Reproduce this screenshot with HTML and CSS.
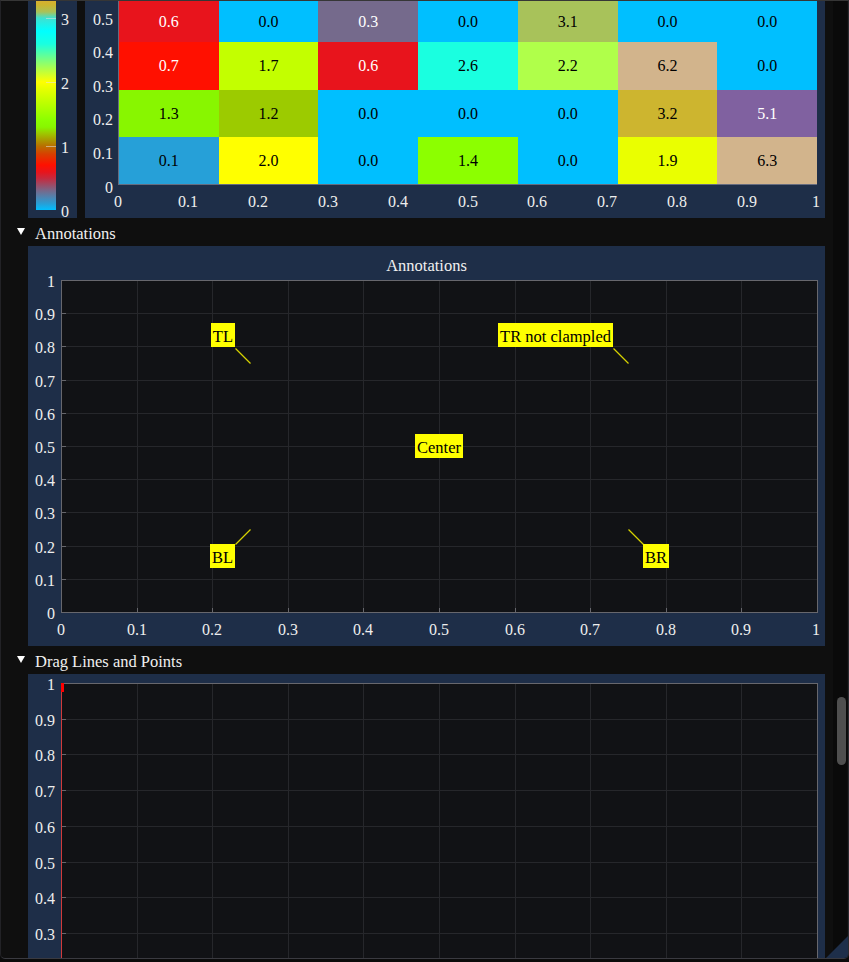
FILE: index.html
```html
<!DOCTYPE html>
<html>
<head>
<meta charset="utf-8">
<link rel="stylesheet" href="styles.css">
</head>
<body>
<div class="window">
  <div class="content">
    <div class="heat-row">
      <div class="frame cbar-frame">
        <div class="cbar">
          <span class="cbar-tick" style="top:17px"></span>
          <span class="cbar-tick" style="top:81px"></span>
          <span class="cbar-tick" style="top:145px"></span>
        </div>
        <div class="cbar-labels">
          <span class="lbl" style="top:17px">3</span>
          <span class="lbl" style="top:81px">2</span>
          <span class="lbl" style="top:145px">1</span>
          <span class="lbl" style="top:209px">0</span>
        </div>
      </div>
      <div class="frame heat-frame">
        <div class="yaxis heat-y">
          <span class="lbl" style="top:19px">0.5</span>
          <span class="lbl" style="top:52px">0.4</span>
          <span class="lbl" style="top:86px">0.3</span>
          <span class="lbl" style="top:119px">0.2</span>
          <span class="lbl" style="top:153px">0.1</span>
          <span class="lbl" style="top:187px">0</span>
        </div>
        <div class="heat-plot">
          <div class="cell light" style="background:#e8141c">0.6</div>
          <div class="cell" style="background:#00bfff">0.0</div>
          <div class="cell light" style="background:#756a8c">0.3</div>
          <div class="cell" style="background:#00bfff">0.0</div>
          <div class="cell" style="background:#a8c25a">3.1</div>
          <div class="cell" style="background:#00bfff">0.0</div>
          <div class="cell" style="background:#00bfff">0.0</div>

          <div class="cell light" style="background:#ff1000">0.7</div>
          <div class="cell" style="background:#c3ff00">1.7</div>
          <div class="cell light" style="background:#e8141c">0.6</div>
          <div class="cell" style="background:#1affe0">2.6</div>
          <div class="cell" style="background:#b0ff4a">2.2</div>
          <div class="cell" style="background:#d2b48c">6.2</div>
          <div class="cell" style="background:#00bfff">0.0</div>

          <div class="cell" style="background:#88f600">1.3</div>
          <div class="cell" style="background:#9ccb00">1.2</div>
          <div class="cell" style="background:#00bfff">0.0</div>
          <div class="cell" style="background:#00bfff">0.0</div>
          <div class="cell" style="background:#00bfff">0.0</div>
          <div class="cell" style="background:#cdb52f">3.2</div>
          <div class="cell light" style="background:#8061a0">5.1</div>

          <div class="cell" style="background:#26a0d8">0.1</div>
          <div class="cell" style="background:#ffff00">2.0</div>
          <div class="cell" style="background:#00bfff">0.0</div>
          <div class="cell" style="background:#8cff00">1.4</div>
          <div class="cell" style="background:#00bfff">0.0</div>
          <div class="cell" style="background:#eaff00">1.9</div>
          <div class="cell" style="background:#d2b48c">6.3</div>
        </div>
        <div class="xaxis">
          <span class="lbl" style="left:0px">0</span>
          <span class="lbl" style="left:70px">0.1</span>
          <span class="lbl" style="left:140px">0.2</span>
          <span class="lbl" style="left:210px">0.3</span>
          <span class="lbl" style="left:280px">0.4</span>
          <span class="lbl" style="left:350px">0.5</span>
          <span class="lbl" style="left:419px">0.6</span>
          <span class="lbl" style="left:489px">0.7</span>
          <span class="lbl" style="left:559px">0.8</span>
          <span class="lbl" style="left:629px">0.9</span>
          <span class="lbl" style="left:698px">1</span>
        </div>
      </div>
    </div>

    <div class="section-header"><span class="tri"></span><span>Annotations</span></div>

    <div class="frame plot-frame">
      <div class="plot-title">Annotations</div>
      <div class="yaxis">
        <span class="lbl" style="top:0px">1</span>
        <span class="lbl" style="top:33px">0.9</span>
        <span class="lbl" style="top:66px">0.8</span>
        <span class="lbl" style="top:100px">0.7</span>
        <span class="lbl" style="top:133px">0.6</span>
        <span class="lbl" style="top:166px">0.5</span>
        <span class="lbl" style="top:199px">0.4</span>
        <span class="lbl" style="top:232px">0.3</span>
        <span class="lbl" style="top:266px">0.2</span>
        <span class="lbl" style="top:299px">0.1</span>
        <span class="lbl" style="top:332px">0</span>
      </div>
      <div class="plot-area annot-area">
        <svg class="plot-svg" width="757" height="333" viewBox="0 0 757 333">
          <g class="grid">
            <line x1="76.5" y1="0" x2="76.5" y2="333"/>
            <line x1="151.5" y1="0" x2="151.5" y2="333"/>
            <line x1="227.5" y1="0" x2="227.5" y2="333"/>
            <line x1="302.5" y1="0" x2="302.5" y2="333"/>
            <line x1="378.5" y1="0" x2="378.5" y2="333"/>
            <line x1="454.5" y1="0" x2="454.5" y2="333"/>
            <line x1="529.5" y1="0" x2="529.5" y2="333"/>
            <line x1="605.5" y1="0" x2="605.5" y2="333"/>
            <line x1="680.5" y1="0" x2="680.5" y2="333"/>
            <line x1="0" y1="33.5" x2="757" y2="33.5"/>
            <line x1="0" y1="66.5" x2="757" y2="66.5"/>
            <line x1="0" y1="100.5" x2="757" y2="100.5"/>
            <line x1="0" y1="133.5" x2="757" y2="133.5"/>
            <line x1="0" y1="166.5" x2="757" y2="166.5"/>
            <line x1="0" y1="199.5" x2="757" y2="199.5"/>
            <line x1="0" y1="232.5" x2="757" y2="232.5"/>
            <line x1="0" y1="266.5" x2="757" y2="266.5"/>
            <line x1="0" y1="299.5" x2="757" y2="299.5"/>
          </g>
          <g class="ticks">
            <line x1="0" y1="33.5" x2="5" y2="33.5"/>
            <line x1="0" y1="66.5" x2="5" y2="66.5"/>
            <line x1="0" y1="100.5" x2="5" y2="100.5"/>
            <line x1="0" y1="133.5" x2="5" y2="133.5"/>
            <line x1="0" y1="166.5" x2="5" y2="166.5"/>
            <line x1="0" y1="199.5" x2="5" y2="199.5"/>
            <line x1="0" y1="232.5" x2="5" y2="232.5"/>
            <line x1="0" y1="266.5" x2="5" y2="266.5"/>
            <line x1="0" y1="299.5" x2="5" y2="299.5"/>
            <line x1="76.5" y1="328" x2="76.5" y2="333"/>
            <line x1="151.5" y1="328" x2="151.5" y2="333"/>
            <line x1="227.5" y1="328" x2="227.5" y2="333"/>
            <line x1="302.5" y1="328" x2="302.5" y2="333"/>
            <line x1="378.5" y1="328" x2="378.5" y2="333"/>
            <line x1="454.5" y1="328" x2="454.5" y2="333"/>
            <line x1="529.5" y1="328" x2="529.5" y2="333"/>
            <line x1="605.5" y1="328" x2="605.5" y2="333"/>
            <line x1="680.5" y1="328" x2="680.5" y2="333"/>
          </g>
          <rect class="border" x="0.5" y="0.5" width="756" height="332"/>
          <g class="leader">
            <line x1="189.5" y1="83.5" x2="174.5" y2="68.5"/>
            <line x1="567.5" y1="83.5" x2="552.5" y2="68.5"/>
            <line x1="189.5" y1="249.5" x2="174.5" y2="264.5"/>
            <line x1="567.5" y1="249.5" x2="582.5" y2="264.5"/>
          </g>
        </svg>
        <div class="anchor" style="left:189px;top:83px"><span class="note note-up-left">TL</span></div>
        <div class="anchor" style="left:567px;top:83px"><span class="note note-up-left">TR not clampled</span></div>
        <div class="anchor" style="left:378px;top:166px"><span class="note note-center">Center</span></div>
        <div class="anchor" style="left:189px;top:249px"><span class="note note-down-left">BL</span></div>
        <div class="anchor" style="left:567px;top:249px"><span class="note note-down-right">BR</span></div>
      </div>
      <div class="xaxis">
        <span class="lbl" style="left:0px">0</span>
        <span class="lbl" style="left:76px">0.1</span>
        <span class="lbl" style="left:151px">0.2</span>
        <span class="lbl" style="left:227px">0.3</span>
        <span class="lbl" style="left:302px">0.4</span>
        <span class="lbl" style="left:378px">0.5</span>
        <span class="lbl" style="left:454px">0.6</span>
        <span class="lbl" style="left:529px">0.7</span>
        <span class="lbl" style="left:605px">0.8</span>
        <span class="lbl" style="left:680px">0.9</span>
        <span class="lbl" style="left:755px">1</span>
      </div>
    </div>

    <div class="section-header"><span class="tri"></span><span>Drag Lines and Points</span></div>

    <div class="frame plot-frame drag-frame">
      <div class="yaxis">
        <span class="lbl" style="top:0px">1</span>
        <span class="lbl" style="top:36px">0.9</span>
        <span class="lbl" style="top:71px">0.8</span>
        <span class="lbl" style="top:107px">0.7</span>
        <span class="lbl" style="top:143px">0.6</span>
        <span class="lbl" style="top:179px">0.5</span>
        <span class="lbl" style="top:214px">0.4</span>
        <span class="lbl" style="top:250px">0.3</span>
      </div>
      <div class="plot-area drag-area">
        <svg class="plot-svg" width="757" height="358" viewBox="0 0 757 358">
          <g class="grid">
            <line x1="76.5" y1="0" x2="76.5" y2="358"/>
            <line x1="151.5" y1="0" x2="151.5" y2="358"/>
            <line x1="227.5" y1="0" x2="227.5" y2="358"/>
            <line x1="302.5" y1="0" x2="302.5" y2="358"/>
            <line x1="378.5" y1="0" x2="378.5" y2="358"/>
            <line x1="454.5" y1="0" x2="454.5" y2="358"/>
            <line x1="529.5" y1="0" x2="529.5" y2="358"/>
            <line x1="605.5" y1="0" x2="605.5" y2="358"/>
            <line x1="680.5" y1="0" x2="680.5" y2="358"/>
            <line x1="0" y1="36.5" x2="757" y2="36.5"/>
            <line x1="0" y1="71.5" x2="757" y2="71.5"/>
            <line x1="0" y1="107.5" x2="757" y2="107.5"/>
            <line x1="0" y1="143.5" x2="757" y2="143.5"/>
            <line x1="0" y1="179.5" x2="757" y2="179.5"/>
            <line x1="0" y1="214.5" x2="757" y2="214.5"/>
            <line x1="0" y1="250.5" x2="757" y2="250.5"/>
            <line x1="0" y1="286.5" x2="757" y2="286.5"/>
            <line x1="0" y1="321.5" x2="757" y2="321.5"/>
          </g>
          <g class="ticks">
            <line x1="0" y1="36.5" x2="5" y2="36.5"/>
            <line x1="0" y1="71.5" x2="5" y2="71.5"/>
            <line x1="0" y1="107.5" x2="5" y2="107.5"/>
            <line x1="0" y1="143.5" x2="5" y2="143.5"/>
            <line x1="0" y1="179.5" x2="5" y2="179.5"/>
            <line x1="0" y1="214.5" x2="5" y2="214.5"/>
            <line x1="0" y1="250.5" x2="5" y2="250.5"/>
            <line x1="0" y1="286.5" x2="5" y2="286.5"/>
            <line x1="0" y1="321.5" x2="5" y2="321.5"/>
          </g>
          <rect class="border" x="0.5" y="0.5" width="756" height="357"/>
          <line class="drag-line" x1="0.5" y1="0" x2="0.5" y2="358"/>
          <rect class="drag-point" x="0" y="0" width="3" height="9"/>
        </svg>
      </div>
    </div>
  </div>
  <div class="scrollbar"><div class="thumb"></div></div>
  <div class="grip"></div>
</div>
</body>
</html>
```

FILE: styles.css
```css
* { box-sizing: border-box; }

html, body {
  margin: 0;
  padding: 0;
}

body {
  width: 849px;
  height: 962px;
  overflow: hidden;
  background: #0b0b0b;
  font-family: "Liberation Serif", "Times New Roman", serif;
  color: #f0f0f0;
}

.window {
  position: relative;
  width: 849px;
  height: 959px;
  display: flex;
  background: #0f0f0f;
  border-top: 1px solid #363636;
  border-bottom: 1px solid #3a3a40;
  border-left: 1px solid #222226;
  border-right: 1px solid #2a2a30;
  border-radius: 0 0 5px 5px;
  overflow: hidden;
}

.content {
  width: 832px;
  flex: none;
}

.frame {
  background: #1e2e48;
}

/* ---------- heatmap row ---------- */
.heat-row {
  display: flex;
  gap: 8px;
  height: 217px;
  margin-left: 27px;
}

.cbar-frame {
  width: 49px;
  height: 217px;
  padding: 0 0 8px 8px;
  display: flex;
}

.cbar {
  position: relative;
  width: 20px;
  height: 209px;
  background: linear-gradient(to top,
    #00bfff 0px,
    #26a0d8 6px,
    #756a8c 19px,
    #c8283c 32px,
    #e8141c 38px,
    #ff1000 45px,
    #d84000 56px,
    #b87000 64px,
    #9ccb00 77px,
    #88f600 83px,
    #8cff00 90px,
    #c3ff00 109px,
    #eaff00 122px,
    #ffff00 128px,
    #b0ff4a 141px,
    #1affe0 166px,
    #00ffff 179px,
    #40e0d0 192px,
    #a8c25a 198px,
    #cdb52f 205px,
    #d8b030 209px);
}

.cbar-tick {
  position: absolute;
  left: 10px;
  width: 10px;
  height: 1px;
  background: rgba(225, 225, 225, 0.55);
}

.cbar-labels {
  position: relative;
  flex: 1;
}

.cbar-labels .lbl {
  left: 5px;
  transform: translateY(-50%);
  margin-top: 2px;
}

.lbl {
  position: absolute;
  font-size: 16px;
  line-height: 16px;
  white-space: nowrap;
  color: #eeeeee;
}

.heat-frame {
  width: 740px;
  height: 217px;
  display: grid;
  grid-template-columns: 33px 699px;
  grid-template-rows: 184px 33px;
  padding-right: 8px;
}

.yaxis {
  position: relative;
}

.yaxis .lbl {
  right: 6px;
  transform: translateY(-50%);
  margin-top: 2px;
}

.heat-y .lbl {
  right: 5px;
  margin-top: 0;
}

.heat-plot {
  display: grid;
  grid-template-columns: repeat(7, 1fr);
  grid-template-rows: 41px 48px 47px 47px;
  border-left: 1px solid rgba(150, 150, 165, 0.6);
  border-bottom: 1px solid rgba(150, 150, 165, 0.6);
}

.cell {
  display: flex;
  align-items: center;
  justify-content: center;
  font-size: 16px;
  line-height: 16px;
  color: #000;
}

.cell.light {
  color: #fff;
}

.xaxis {
  position: relative;
  grid-column: 2;
}

.xaxis .lbl {
  top: 9px;
  transform: translateX(-50%);
}

/* ---------- section headers ---------- */
.section-header {
  height: 28px;
  display: flex;
  align-items: center;
  padding-left: 16px;
  padding-top: 4px;
  font-size: 16.5px;
  line-height: 20px;
  color: #f0f0f0;
}

.tri {
  width: 0;
  height: 0;
  border-left: 4.5px solid transparent;
  border-right: 4.5px solid transparent;
  border-top: 7px solid #ffffff;
  margin-right: 10px;
  margin-top: -5px;
}

/* ---------- plots ---------- */
.plot-frame {
  margin-left: 27px;
  width: 797px;
  display: grid;
  grid-template-columns: 33px 757px;
  grid-template-rows: 34px 333px 33px;
  padding-right: 7px;
}

.plot-title {
  grid-column: 1 / 3;
  text-align: center;
  font-size: 16.5px;
  line-height: 20px;
  padding-top: 10px;
  padding-left: 7px;
}

.plot-area {
  position: relative;
  background: #111215;
}

.plot-svg {
  position: absolute;
  left: 0;
  top: 0;
  display: block;
}

.grid line {
  stroke: #26272b;
  stroke-width: 1;
}

.ticks line {
  stroke: #67676d;
  stroke-width: 1;
}

.border {
  fill: none;
  stroke: #67676d;
  stroke-width: 1;
}

.leader line {
  stroke: #d6d200;
  stroke-width: 1.3;
}

.anchor {
  position: absolute;
  width: 0;
  height: 0;
}

.note {
  position: absolute;
  background: #ffff00;
  color: #000;
  font-size: 16.5px;
  line-height: 21px;
  height: 24px;
  padding: 3px 2px 0;
  white-space: nowrap;
}

.note-up-left {
  right: 15px;
  bottom: 16px;
}

.note-down-left {
  right: 15px;
  top: 15px;
}

.note-down-right {
  left: 15px;
  top: 15px;
}

.note-center {
  left: 0;
  top: 0;
  transform: translate(-50%, -50%);
}

.drag-frame {
  grid-template-rows: 358px;
  padding-top: 9px;
  height: 380px;
}

.drag-line {
  stroke: #d03a3a;
  stroke-width: 1;
}

.drag-point {
  fill: #ff0000;
}

/* ---------- scrollbar & grip ---------- */
.scrollbar {
  width: 14px;
  flex: none;
  background: #0a0a0a;
  padding-top: 696px;
  padding-left: 4px;
}

.thumb {
  width: 9px;
  height: 68px;
  border-radius: 5px;
  background: #4f4f4f;
}

.grip {
  position: absolute;
  right: 0;
  bottom: 0;
  width: 22px;
  height: 22px;
  background: #1e2f4a;
  clip-path: polygon(100% 0, 100% 100%, 0 100%);
}
```
